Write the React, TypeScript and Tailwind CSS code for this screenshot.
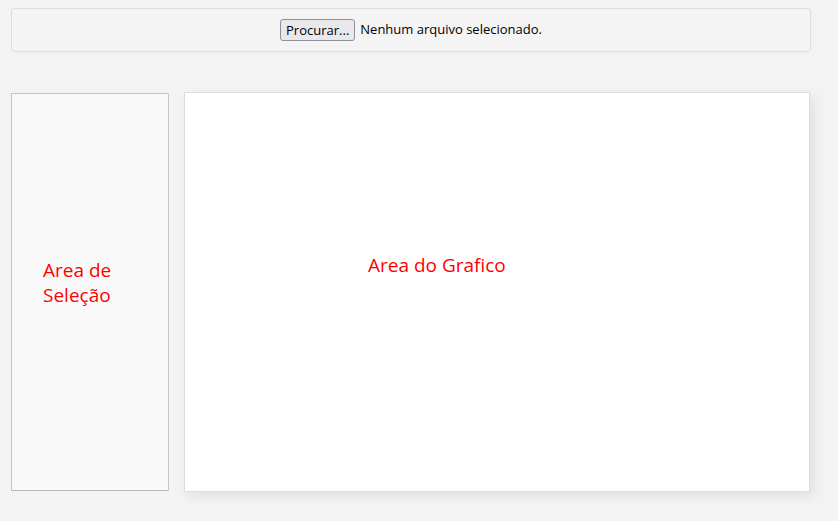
export default function App() {
  return (
    <div className="min-h-[521px] bg-[#f3f3f3] px-[11px] pt-[8px] font-['Open_Sans',sans-serif]">
      <div className="flex h-[44px] w-[800px] items-center justify-center rounded-[3px] border border-[#dddddd] bg-[#f4f4f4]">
        <button className="h-[22px] rounded-[3px] border border-[#8f8f9d] bg-[#e9e9ed] px-[5px] text-[13px] leading-none text-black">
          Procurar...
        </button>
        <span className="ml-[5px] text-[13px] text-black">Nenhum arquivo selecionado.</span>
      </div>

      <div className="mt-[40px] flex items-start gap-[15px]">
        <div className="mt-[1px] flex h-[398px] w-[158px] items-center border border-[#c6c6c6] border-b-[#b9b6c6] bg-[#f9f9f9] pl-[31px] pb-[18px]">
          <p className="text-[19px] leading-[25px] text-[#ff0000]">
            Area de
            <br />
            Seleção
          </p>
        </div>
        <div className="h-[400px] w-[626px] border border-[#dddddd] bg-white pl-[183px] pt-[160px] shadow-[4px_4px_12px_rgba(0,0,0,0.08)]">
          <p className="text-[19px] leading-[25px] text-[#ff0000]">Area do Grafico</p>
        </div>
      </div>
    </div>
  );
}
